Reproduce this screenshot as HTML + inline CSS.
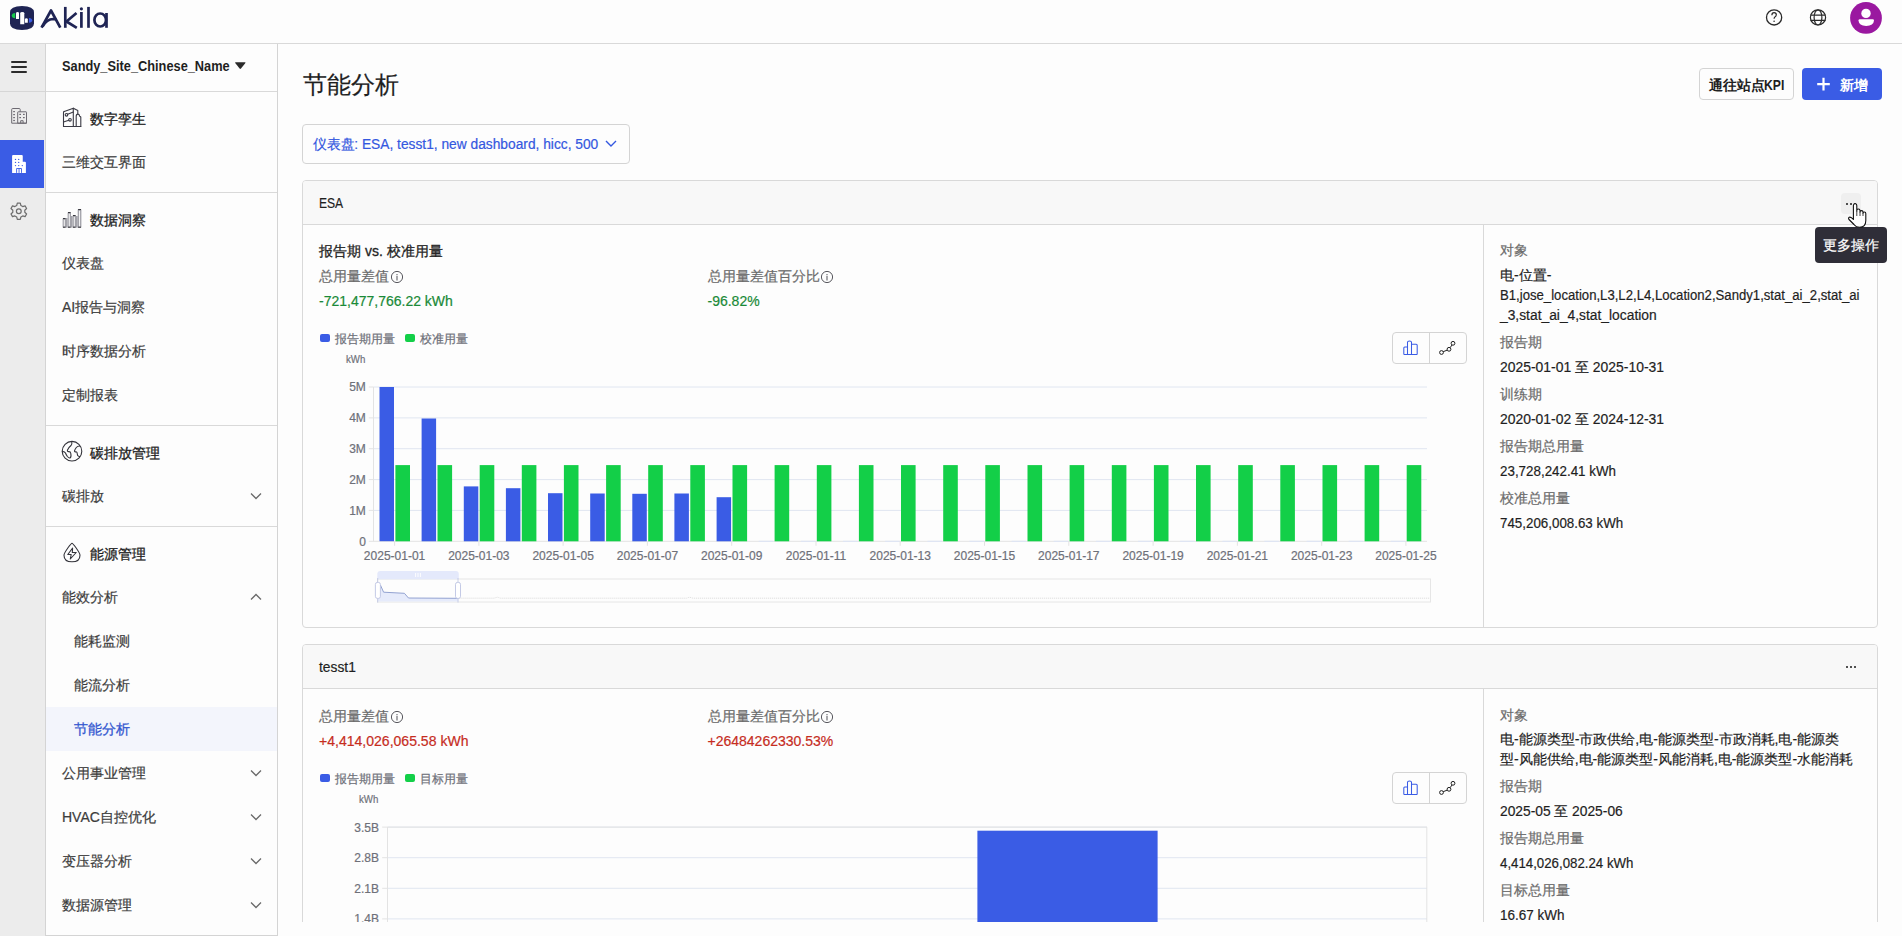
<!DOCTYPE html>
<html><head><meta charset="utf-8">
<style>
*{box-sizing:border-box;}
html,body{margin:0;padding:0;}
body{width:1902px;height:936px;overflow:hidden;position:relative;background:#fdfdfd;font-family:"Liberation Sans",sans-serif;color:#222;}
.abs{position:absolute;}
.t{position:absolute;white-space:nowrap;line-height:1;}
.n{-webkit-text-stroke:0.2px currentColor;}
.m{-webkit-text-stroke:0.3px currentColor;}
svg{position:absolute;overflow:visible;}
</style></head>
<body>

<div class="abs" style="left:0px;top:43px;width:1902px;height:1px;background:#d9d9d9"></div>
<svg style="left:0;top:0" width="120" height="40" viewBox="0 0 120 40">
<path d="M10,12.5 Q10,6 22,6 Q34,6 34,12.5 L34,23.5 Q34,30 22,30 Q10,30 10,23.5 Z" fill="#1f2454"/>
<path d="M15.2,12.9 L15.2,18.3 Q11.7,18 11.7,15.6 Q11.7,13.2 15.2,12.9Z" fill="#16c84a"/>
<path d="M16,19 L16,13.2 Q16,12 17.5,12 Q19,12 19,13.2 L19,19Z" fill="#fff"/>
<path d="M20.2,24.3 L20.2,13.2 Q20.2,12 22.25,12 Q24.3,12 24.3,13.2 L24.3,24.3Z" fill="#fff"/>
<path d="M24.9,22.7 L24.9,19.5 Q24.9,18.3 26.35,18.3 Q27.8,18.3 27.8,19.5 L27.8,22.7Z" fill="#fff"/>
<path d="M29,18 L29,22.7 Q32.2,22.4 32.2,20.3 Q32.2,18.3 29,18Z" fill="#3a5ce5"/>
<g fill="none" stroke="#1f2454" stroke-width="2.7" stroke-linejoin="round">
<path d="M41.5,27.6 L51,10.5 L60.3,27.6"/>
<path d="M42.5,26.5 Q47,19 53,19 L56.3,19.3"/>
<path d="M65.3,6.9 L65.3,27.8"/>
<path d="M76.5,13 L66.5,21.5 L76.8,27.8"/>
<path d="M81.4,12 L81.4,27.8"/>
<path d="M88.5,6.9 L88.5,27.8"/>
<ellipse cx="100.2" cy="20" rx="5.8" ry="6.5"/>
<path d="M106.5,13 L106.5,27.8"/>
</g>
<circle cx="81.4" cy="8.8" r="1.6" fill="#1f2454"/>
</svg>
<svg style="left:1750px;top:0" width="150" height="40" viewBox="1750 0 150 40">
<circle cx="1774.1" cy="17.4" r="7.6" fill="none" stroke="#2a2a2a" stroke-width="1.3"/>
<path d="M1771.9,15.2 Q1771.9,12.7 1774.1,12.7 Q1776.3,12.7 1776.3,14.8 Q1776.3,16.2 1774.9,17 Q1774.1,17.5 1774.1,18.8" fill="none" stroke="#2a2a2a" stroke-width="1.2"/>
<circle cx="1774.1" cy="21.2" r="0.8" fill="#2a2a2a"/>
<g fill="none" stroke="#2a2a2a" stroke-width="1.2">
<circle cx="1818" cy="17.4" r="7.6"/>
<ellipse cx="1818" cy="17.4" rx="3.9" ry="7.6"/>
<path d="M1810.6,15.2 L1825.4,15.2 M1810.6,20.4 L1825.4,20.4"/>
</g>
<circle cx="1866" cy="17.9" r="15.9" fill="#9a18a0"/>
<circle cx="1866" cy="13.4" r="4.7" fill="#fff"/>
<path d="M1858.5,20.6 Q1858.5,19.3 1859.8,19.3 L1872.7,19.3 Q1874,19.3 1874,20.6 Q1873.6,26 1866.2,26 Q1858.9,26 1858.5,20.6Z" fill="#fff"/>
</svg>
<div class="abs" style="left:0px;top:44px;width:45px;height:892px;background:#ececec"></div>
<div class="abs" style="left:45px;top:44px;width:1px;height:892px;background:#d4d4d4"></div>
<div class="abs" style="left:0px;top:91px;width:45px;height:1px;background:#d6d6d6"></div>
<div class="abs" style="left:11px;top:61.3px;width:16px;height:1.6px;background:#2b2b2b;border-radius:1px"></div>
<div class="abs" style="left:11px;top:66.3px;width:16px;height:1.6px;background:#2b2b2b;border-radius:1px"></div>
<div class="abs" style="left:11px;top:71.3px;width:16px;height:1.6px;background:#2b2b2b;border-radius:1px"></div>
<svg style="left:0;top:100px" width="45" height="130" viewBox="0 100 45 130">
<g fill="none" stroke="#6d6a72" stroke-width="1" stroke-linejoin="round">
<path d="M11.7,123.2 L11.7,109.5 Q11.7,108.5 12.7,108.5 L19.2,108.5 Q20.2,108.5 20.2,109.5 L20.2,111.8"/>
<path d="M17.7,123.2 L17.7,112.3 Q17.7,111.8 18.2,111.8 L26,111.8 Q26.5,111.8 26.5,112.3 L26.5,123.2 Z"/>
<path d="M11.7,123.2 L26.5,123.2"/>
<path d="M20.7,123.2 L20.7,120.7 L23.1,120.7 L23.1,123.2"/>
</g>
<g fill="#6d6a72">
<rect x="13.2" y="111" width="1.7" height="1.2"/><rect x="13.2" y="114" width="1.7" height="1.2"/><rect x="13.2" y="117" width="1.7" height="1.2"/><rect x="13.2" y="119.9" width="1.7" height="1.2"/>
<rect x="19.3" y="113.8" width="1.7" height="1.2"/><rect x="23" y="113.8" width="1.7" height="1.2"/><rect x="19.3" y="117" width="1.7" height="1.2"/><rect x="23" y="117" width="1.7" height="1.2"/>
</g>
</svg>
<div class="abs" style="left:0px;top:140px;width:44px;height:48px;background:#3a5ce5"></div>
<svg style="left:0;top:140px" width="45" height="48" viewBox="0 140 45 48">
<path d="M12.1,172.9 L12.1,155.9 Q12.1,154.9 13.1,154.9 L21.75,154.9 Q22.75,154.9 22.75,155.9 L22.75,161.8 L24.9,161.8 Q25.9,161.8 25.9,162.8 L25.9,172.9 Z" fill="#fff"/>
<g fill="#3a5ce5">
<circle cx="15.5" cy="159.4" r="0.7"/><circle cx="18.7" cy="159.4" r="0.7"/>
<circle cx="15.5" cy="162.4" r="0.7"/><circle cx="18.7" cy="162.4" r="0.7"/>
<circle cx="15.5" cy="165.6" r="0.7"/><circle cx="18.7" cy="165.6" r="0.7"/><circle cx="22.3" cy="165.6" r="0.7"/>
</g>
<path d="M16.6,172.9 L16.6,168.5 L21.5,168.5 L21.5,172.9 M19.05,168.5 L19.05,172.9" fill="none" stroke="#3a5ce5" stroke-width="0.9"/>
</svg>
<svg style="left:0;top:195px" width="45" height="35" viewBox="0 195 45 35">
<path fill="none" stroke="#6d6d6d" stroke-width="1.2" stroke-linejoin="round" d="M17.3,203.2 L20.3,203.2 L20.9,205.6 L22.7,206.6 L25.1,205.9 L26.6,208.5 L24.8,210.2 L24.8,212.3 L26.6,214 L25.1,216.6 L22.7,215.9 L20.9,216.9 L20.3,219.3 L17.3,219.3 L16.7,216.9 L14.9,215.9 L12.5,216.6 L11,214 L12.8,212.3 L12.8,210.2 L11,208.5 L12.5,205.9 L14.9,206.6 L16.7,205.6 Z"/>
<circle cx="18.8" cy="211.25" r="2.4" fill="none" stroke="#6d6d6d" stroke-width="1.2"/>
</svg>
<div class="abs" style="left:277px;top:44px;width:1px;height:892px;background:#d4d4d4"></div>
<div class="abs" style="left:46px;top:935px;width:232px;height:1px;background:#d4d4d4"></div>
<div class="abs" style="left:46px;top:91px;width:231px;height:1px;background:#d9d9d9"></div>
<div class="abs" style="left:46px;top:192px;width:231px;height:1px;background:#d9d9d9"></div>
<div class="abs" style="left:46px;top:425px;width:231px;height:1px;background:#d9d9d9"></div>
<div class="abs" style="left:46px;top:526px;width:231px;height:1px;background:#d9d9d9"></div>
<div id="f0" class="t " style="left:62px;top:59.0px;font-size:14px;color:#1f1f1f;font-weight:bold;transform:scaleX(0.9131);transform-origin:0 0;">Sandy_Site_Chinese_Name</div>
<svg style="left:234px;top:60px" width="14" height="12" viewBox="234 60 14 12"><path d="M235.6,62.3 L245,62.3 Q245.8,62.3 245.4,63 L241,68.6 Q240.3,69.3 239.6,68.6 L235.2,63 Q234.8,62.3 235.6,62.3Z" fill="#2b2b2b"/></svg>
<svg style="left:56px;top:100px" width="34" height="34" viewBox="56 100 34 34">
<g fill="none" stroke="#3a3a44" stroke-width="1.1" stroke-linejoin="round" stroke-linecap="round">
<path d="M63.5,126.5 L63.5,112.4 Q63.5,111.6 64.3,111.4 L73.3,108.2 L73.3,126.5 Z"/>
<path d="M73.3,108.2 L77.8,110.6 L77.8,114"/>
<path d="M76.2,126.5 L76.2,116.2 Q76.2,114.1 77.9,114.1 Q79.5,114.1 79.7,116.2 L80.8,117 L80.8,126.5 Z"/>
<path d="M63.5,126.5 L80.8,126.5"/>
<circle cx="66.5" cy="114.8" r="1.3"/>
<path d="M67.7,114.2 L73.3,112"/>
<circle cx="70" cy="119.8" r="1.3"/>
<path d="M63.5,122 L68.8,120.3"/>
</g>
</svg>
<div class="t m" style="left:90px;top:111.5px;font-size:14px;color:#1f1f1f;font-weight:500;">数字孪生</div>
<div class="t n" style="left:62px;top:155.4px;font-size:14px;color:#3c3c3c;font-weight:normal;">三维交互界面</div>
<svg style="left:56px;top:204px" width="34" height="30" viewBox="56 204 34 30">
<path d="M62.6,227.6 L62.6,218.4 L66,218.4 L66,227.6 Z M67.6,227.6 L67.6,212.4 L71,212.4 L71,227.6 Z M72.6,227.6 L72.6,215.4 L76,215.4 L76,227.6Z M77.7,227.6 L77.7,209.4 L81.4,209.4 L81.4,227.6Z" fill="#a3a3aa"/>
<rect x="66" y="218" width="1.6" height="9.6" fill="#a3a3aa"/><rect x="71" y="216" width="1.6" height="11.6" fill="#a3a3aa"/><rect x="76" y="216" width="1.7" height="11.6" fill="#a3a3aa"/>
<g stroke="#fff" stroke-width="0.9"><path d="M64.3,219.6 L64.3,226.6 M69.3,213.6 L69.3,226.6 M74.3,216.6 L74.3,226.6 M79.55,210.6 L79.55,226.6"/></g>
<g stroke="#2a2a32" stroke-width="1"><path d="M63,218.6 L65.6,218.6 M68,212.6 L70.6,212.6 M73,215.6 L75.6,215.6 M78.1,209.6 L81,209.6 M63,227.2 L65.6,227.2 M68,227.2 L70.6,227.2 M73,227.2 L75.6,227.2 M78.1,227.2 L81,227.2"/></g>
</svg>
<div class="t m" style="left:90px;top:212.7px;font-size:14px;color:#1f1f1f;font-weight:500;">数据洞察</div>
<div class="t n" style="left:62px;top:255.9px;font-size:14px;color:#3c3c3c;font-weight:normal;">仪表盘</div>
<div class="t n" style="left:62px;top:343.9px;font-size:14px;color:#3c3c3c;font-weight:normal;">时序数据分析</div>
<div class="t n" style="left:62px;top:387.9px;font-size:14px;color:#3c3c3c;font-weight:normal;">定制报表</div>
<div id="f1" class="t n" style="left:62px;top:299.9px;font-size:14px;color:#3c3c3c;font-weight:normal;">AI报告与洞察</div>
<svg style="left:56px;top:436px" width="40" height="30" viewBox="56 436 40 30">
<g fill="none" stroke="#33333a" stroke-width="1.1" stroke-linejoin="round" stroke-linecap="round">
<circle cx="72" cy="451.2" r="9.8"/>
<path d="M71.8,441.5 Q72.2,444.5 71,445.5 Q68.5,447.5 67.5,450 Q67,451.6 68.6,451.6 Q70.5,451.4 70.8,453.5 Q71.5,457 70,458 Q69,458.4 67.4,456.5 Q66,454.4 65.5,453 Q64.8,451.8 62.4,451.2"/>
<path d="M79.7,446 Q77.5,446 76.3,447.5 Q74.8,449.3 74.5,451 Q74.5,452 76.2,451.8 Q77.2,451.8 77.3,454 Q77.2,455.8 78.7,456.3 L79.8,456.8"/>
</g>
</svg>
<div class="t m" style="left:90px;top:445.5px;font-size:14px;color:#1f1f1f;font-weight:500;">碳排放管理</div>
<div class="t n" style="left:62px;top:488.9px;font-size:14px;color:#3c3c3c;font-weight:normal;">碳排放</div>
<svg style="left:248px;top:490px" width="16" height="12" viewBox="248 490 16 12"><path d="M251,493.5 L256,498.5 L261,493.5" fill="none" stroke="#6a6a6a" stroke-width="1.3"/></svg>
<svg style="left:56px;top:538px" width="40" height="30" viewBox="56 538 40 30">
<g fill="none" stroke="#33333a" stroke-width="1.1" stroke-linejoin="round">
<path d="M72,543.2 Q73,543.5 76,547.8 Q80,553.5 80,555.2 Q80,561.8 72,561.8 Q64,561.8 64,555.2 Q64,553.5 68,547.8 Q71,543.5 72,543.2Z"/>
<path d="M72.6,548 L67.8,554.5 L71.2,554.5 L70.3,559 L76.2,552.5 L72.3,552.5 Z"/>
</g>
</svg>
<div class="t m" style="left:90px;top:546.5px;font-size:14px;color:#1f1f1f;font-weight:500;">能源管理</div>
<div class="t n" style="left:62px;top:589.9px;font-size:14px;color:#3c3c3c;font-weight:normal;">能效分析</div>
<svg style="left:248px;top:591px" width="16" height="12" viewBox="248 591 16 12"><path d="M251,599.5 L256,594.5 L261,599.5" fill="none" stroke="#6a6a6a" stroke-width="1.3"/></svg>
<div class="t n" style="left:74px;top:633.9px;font-size:14px;color:#3c3c3c;font-weight:normal;">能耗监测</div>
<div class="t n" style="left:74px;top:677.9px;font-size:14px;color:#3c3c3c;font-weight:normal;">能流分析</div>
<div class="abs" style="left:46px;top:707px;width:231px;height:44px;background:#f3f5fc"></div>
<div class="t m" style="left:74px;top:721.9px;font-size:14px;color:#3458d0;font-weight:500;">节能分析</div>
<div class="t n" style="left:62px;top:765.9px;font-size:14px;color:#3c3c3c;font-weight:normal;">公用事业管理</div>
<svg style="left:248px;top:766.9px" width="16" height="12" viewBox="248 766.9 16 12"><path d="M251,770.4 L256,775.4 L261,770.4" fill="none" stroke="#6a6a6a" stroke-width="1.3"/></svg>
<div class="t n" style="left:62px;top:809.9px;font-size:14px;color:#3c3c3c;font-weight:normal;">HVAC自控优化</div>
<svg style="left:248px;top:810.9px" width="16" height="12" viewBox="248 810.9 16 12"><path d="M251,814.4 L256,819.4 L261,814.4" fill="none" stroke="#6a6a6a" stroke-width="1.3"/></svg>
<div class="t n" style="left:62px;top:853.9px;font-size:14px;color:#3c3c3c;font-weight:normal;">变压器分析</div>
<svg style="left:248px;top:854.9px" width="16" height="12" viewBox="248 854.9 16 12"><path d="M251,858.4 L256,863.4 L261,858.4" fill="none" stroke="#6a6a6a" stroke-width="1.3"/></svg>
<div class="t n" style="left:62px;top:897.9px;font-size:14px;color:#3c3c3c;font-weight:normal;">数据源管理</div>
<svg style="left:248px;top:898.9px" width="16" height="12" viewBox="248 898.9 16 12"><path d="M251,902.4 L256,907.4 L261,902.4" fill="none" stroke="#6a6a6a" stroke-width="1.3"/></svg>
<div class="t n" style="left:303px;top:73.0px;font-size:24px;color:#1f1f1f;font-weight:normal;">节能分析</div>
<div class="abs" style="left:1699px;top:68px;width:95px;height:32px;border:1px solid #d4d4d4;border-radius:4px;background:#fdfdfd"></div>
<div id="f2" class="t " style="left:1708.5px;top:77.5px;font-size:14px;color:#1f1f1f;font-weight:bold;">通往站点</div>
<div class="t " style="left:1764px;top:77.5px;font-size:14px;color:#1f1f1f;font-weight:bold;transform:scaleX(0.87);transform-origin:0 0;">KPI</div>
<div class="abs" style="left:1802px;top:68px;width:80px;height:32px;background:#3a5ce5;border-radius:4px"></div>
<svg style="left:1815px;top:76px" width="16" height="16" viewBox="1815 76 16 16"><path d="M1823.5,77.8 L1823.5,90.5 M1817.2,84.1 L1829.8,84.1" stroke="#fff" stroke-width="2.2"/></svg>
<div class="t " style="left:1839.5px;top:77.5px;font-size:14px;color:#fff;font-weight:bold;">新增</div>
<div class="abs" style="left:302px;top:124px;width:328px;height:40px;border:1px solid #d4d4d4;border-radius:4px;background:#fdfdfd"></div>
<div id="f3" class="t n" style="left:313px;top:137.0px;font-size:14px;color:#3458e0;font-weight:normal;transform:scaleX(0.9828);transform-origin:0 0;">仪表盘: ESA, tesst1, new dashboard, hicc, 500</div>
<svg style="left:600px;top:136px" width="20" height="16" viewBox="600 136 20 16"><path d="M606,141 L611,146 L616,141" fill="none" stroke="#3458e0" stroke-width="1.4"/></svg>
<div class="abs" style="left:302px;top:180px;width:1576px;height:448px;border:1px solid #d9d9d9;border-radius:4px;background:#fdfdfd"></div>
<div class="abs" style="left:303px;top:181px;width:1574px;height:44px;background:#f8f8f8;border-radius:3px 3px 0 0"></div>
<div class="abs" style="left:303px;top:224px;width:1574px;height:1px;background:#d9d9d9"></div>
<div class="abs" style="left:1483px;top:225px;width:1px;height:402px;background:#d9d9d9"></div>
<div id="f4" class="t n" style="left:319px;top:196.0px;font-size:14px;color:#1f1f1f;font-weight:normal;transform:scaleX(0.8600);transform-origin:0 0;">ESA</div>
<div id="f5" class="t m" style="left:319px;top:244.3px;font-size:14px;color:#1f1f1f;font-weight:500;">报告期 vs. 校准用量</div>
<div class="t n" style="left:319px;top:269.3px;font-size:14px;color:#6b6b6b;font-weight:normal;">总用量差值</div>
<svg style="left:389px;top:268.5px" width="16" height="16" viewBox="389 268.5 16 16"><circle cx="397" cy="276.5" r="5.6" fill="none" stroke="#58585e" stroke-width="1"/><path d="M397,275.6 L397,280.0" stroke="#58585e" stroke-width="1.05"/><circle cx="397" cy="274.2" r="0.65" fill="#58585e"/></svg>
<div class="t n" style="left:319px;top:294.4px;font-size:14px;color:#1a8a38;font-weight:normal;">-721,477,766.22 kWh</div>
<div class="t n" style="left:707.5px;top:269.3px;font-size:14px;color:#6b6b6b;font-weight:normal;">总用量差值百分比</div>
<svg style="left:819px;top:268.5px" width="16" height="16" viewBox="819 268.5 16 16"><circle cx="827" cy="276.5" r="5.6" fill="none" stroke="#58585e" stroke-width="1"/><path d="M827,275.6 L827,280.0" stroke="#58585e" stroke-width="1.05"/><circle cx="827" cy="274.2" r="0.65" fill="#58585e"/></svg>
<div class="t n" style="left:707.5px;top:294.4px;font-size:14px;color:#1a8a38;font-weight:normal;">-96.82%</div>
<div class="abs" style="left:320px;top:333.9px;width:10px;height:7.9px;background:#3a5ce5;border-radius:2px"></div>
<div class="t n" style="left:335px;top:332.8px;font-size:12px;color:#6e7079;font-weight:normal;">报告期用量</div>
<div class="abs" style="left:405px;top:333.9px;width:10px;height:7.9px;background:#13cf48;border-radius:2px"></div>
<div class="t n" style="left:420px;top:332.8px;font-size:12px;color:#6e7079;font-weight:normal;">校准用量</div>
<div class="abs" style="left:1392px;top:332px;width:75px;height:32px;border:1px solid #d4d4d4;border-radius:4px;background:#fdfdfd"></div>
<div class="abs" style="left:1429px;top:332px;width:1px;height:32px;background:#d4d4d4"></div>
<svg style="left:1392px;top:332px" width="75" height="32" viewBox="1392 332 75 32">
<path d="M1403.8,354.5 L1403.8,348 Q1403.8,347 1404.8,347 L1407.5,347 M1407.5,354.5 L1407.5,342.3 Q1407.5,341 1409.5,341 Q1411.5,341 1411.5,342.3 L1411.5,354.5 M1411.5,344.2 L1416.2,344.2 Q1417.2,344.2 1417.2,345.2 L1417.2,354.5 M1403.8,354.5 L1417.2,354.5" fill="none" stroke="#3a5ce5" stroke-width="1.05" stroke-linejoin="round"/>
<g fill="none" stroke="#1f1f1f" stroke-width="1">
<circle cx="1441.5" cy="352.5" r="1.9"/><circle cx="1449" cy="349.3" r="1.9"/><circle cx="1453" cy="343.3" r="1.9"/>
<path d="M1443.2,351.7 L1447.3,350.1 M1450.1,347.7 L1452,345"/>
</g></svg>
<div class="t n" style="left:345.6px;top:353.5px;font-size:11px;color:#6e7079;font-weight:normal;transform:scaleX(0.88);transform-origin:0 0;">kWh</div>
<svg style="left:300px;top:370px" width="1180" height="240" viewBox="300 370 1180 240">
<path d="M373.5,510.4 L1427,510.4" stroke="#e0e6f1" stroke-width="1"/>
<path d="M368.8,510.4 L373.5,510.4" stroke="#e3e3e3" stroke-width="1"/>
<path d="M373.5,479.6 L1427,479.6" stroke="#e0e6f1" stroke-width="1"/>
<path d="M368.8,479.6 L373.5,479.6" stroke="#e3e3e3" stroke-width="1"/>
<path d="M373.5,448.7 L1427,448.7" stroke="#e0e6f1" stroke-width="1"/>
<path d="M368.8,448.7 L373.5,448.7" stroke="#e3e3e3" stroke-width="1"/>
<path d="M373.5,417.9 L1427,417.9" stroke="#e0e6f1" stroke-width="1"/>
<path d="M368.8,417.9 L373.5,417.9" stroke="#e3e3e3" stroke-width="1"/>
<path d="M373.5,387.0 L1427,387.0" stroke="#e0e6f1" stroke-width="1"/>
<path d="M368.8,387.0 L373.5,387.0" stroke="#e3e3e3" stroke-width="1"/>
<path d="M368.8,541.3 L1427,541.3" stroke="#e3e3e3" stroke-width="1"/>
<path d="M373.5,387.0 L373.5,541.3" stroke="#e3e3e3" stroke-width="1"/>
<rect x="379.5" y="387.0" width="14.5" height="154.2" fill="#3a5ce5"/>
<rect x="395.4" y="465.1" width="14.6" height="76.2" fill="#13cf48"/>
<path d="M394.6,541.3 L394.6,545.8" stroke="#e3e3e3" stroke-width="1"/>
<rect x="421.6" y="418.5" width="14.5" height="122.8" fill="#3a5ce5"/>
<rect x="437.5" y="465.1" width="14.6" height="76.2" fill="#13cf48"/>
<rect x="463.8" y="486.4" width="14.5" height="54.9" fill="#3a5ce5"/>
<rect x="479.7" y="465.1" width="14.6" height="76.2" fill="#13cf48"/>
<path d="M478.9,541.3 L478.9,545.8" stroke="#e3e3e3" stroke-width="1"/>
<rect x="505.9" y="488.2" width="14.5" height="53.1" fill="#3a5ce5"/>
<rect x="521.8" y="465.1" width="14.6" height="76.2" fill="#13cf48"/>
<rect x="548.0" y="493.2" width="14.5" height="48.1" fill="#3a5ce5"/>
<rect x="563.9" y="465.1" width="14.6" height="76.2" fill="#13cf48"/>
<path d="M563.1,541.3 L563.1,545.8" stroke="#e3e3e3" stroke-width="1"/>
<rect x="590.2" y="493.5" width="14.5" height="47.8" fill="#3a5ce5"/>
<rect x="606.1" y="465.1" width="14.6" height="76.2" fill="#13cf48"/>
<rect x="632.3" y="493.8" width="14.5" height="47.5" fill="#3a5ce5"/>
<rect x="648.2" y="465.1" width="14.6" height="76.2" fill="#13cf48"/>
<path d="M647.4,541.3 L647.4,545.8" stroke="#e3e3e3" stroke-width="1"/>
<rect x="674.4" y="493.5" width="14.5" height="47.8" fill="#3a5ce5"/>
<rect x="690.3" y="465.1" width="14.6" height="76.2" fill="#13cf48"/>
<rect x="716.6" y="497.2" width="14.5" height="44.1" fill="#3a5ce5"/>
<rect x="732.5" y="465.1" width="14.6" height="76.2" fill="#13cf48"/>
<path d="M731.7,541.3 L731.7,545.8" stroke="#e3e3e3" stroke-width="1"/>
<rect x="758.7" y="540.8" width="14.5" height="1" fill="#dde4f6"/>
<rect x="774.6" y="465.1" width="14.6" height="76.2" fill="#13cf48"/>
<rect x="800.9" y="540.8" width="14.5" height="1" fill="#dde4f6"/>
<rect x="816.8" y="465.1" width="14.6" height="76.2" fill="#13cf48"/>
<path d="M816.0,541.3 L816.0,545.8" stroke="#e3e3e3" stroke-width="1"/>
<rect x="843.0" y="540.8" width="14.5" height="1" fill="#dde4f6"/>
<rect x="858.9" y="465.1" width="14.6" height="76.2" fill="#13cf48"/>
<rect x="885.1" y="540.8" width="14.5" height="1" fill="#dde4f6"/>
<rect x="901.0" y="465.1" width="14.6" height="76.2" fill="#13cf48"/>
<path d="M900.2,541.3 L900.2,545.8" stroke="#e3e3e3" stroke-width="1"/>
<rect x="927.3" y="540.8" width="14.5" height="1" fill="#dde4f6"/>
<rect x="943.2" y="465.1" width="14.6" height="76.2" fill="#13cf48"/>
<rect x="969.4" y="540.8" width="14.5" height="1" fill="#dde4f6"/>
<rect x="985.3" y="465.1" width="14.6" height="76.2" fill="#13cf48"/>
<path d="M984.5,541.3 L984.5,545.8" stroke="#e3e3e3" stroke-width="1"/>
<rect x="1011.6" y="540.8" width="14.5" height="1" fill="#dde4f6"/>
<rect x="1027.5" y="465.1" width="14.6" height="76.2" fill="#13cf48"/>
<rect x="1053.7" y="540.8" width="14.5" height="1" fill="#dde4f6"/>
<rect x="1069.6" y="465.1" width="14.6" height="76.2" fill="#13cf48"/>
<path d="M1068.8,541.3 L1068.8,545.8" stroke="#e3e3e3" stroke-width="1"/>
<rect x="1095.9" y="540.8" width="14.5" height="1" fill="#dde4f6"/>
<rect x="1111.8" y="465.1" width="14.6" height="76.2" fill="#13cf48"/>
<rect x="1138.0" y="540.8" width="14.5" height="1" fill="#dde4f6"/>
<rect x="1153.9" y="465.1" width="14.6" height="76.2" fill="#13cf48"/>
<path d="M1153.1,541.3 L1153.1,545.8" stroke="#e3e3e3" stroke-width="1"/>
<rect x="1180.1" y="540.8" width="14.5" height="1" fill="#dde4f6"/>
<rect x="1196.0" y="465.1" width="14.6" height="76.2" fill="#13cf48"/>
<rect x="1222.3" y="540.8" width="14.5" height="1" fill="#dde4f6"/>
<rect x="1238.2" y="465.1" width="14.6" height="76.2" fill="#13cf48"/>
<path d="M1237.4,541.3 L1237.4,545.8" stroke="#e3e3e3" stroke-width="1"/>
<rect x="1264.4" y="540.8" width="14.5" height="1" fill="#dde4f6"/>
<rect x="1280.3" y="465.1" width="14.6" height="76.2" fill="#13cf48"/>
<rect x="1306.6" y="540.8" width="14.5" height="1" fill="#dde4f6"/>
<rect x="1322.5" y="465.1" width="14.6" height="76.2" fill="#13cf48"/>
<path d="M1321.7,541.3 L1321.7,545.8" stroke="#e3e3e3" stroke-width="1"/>
<rect x="1348.7" y="540.8" width="14.5" height="1" fill="#dde4f6"/>
<rect x="1364.6" y="465.1" width="14.6" height="76.2" fill="#13cf48"/>
<rect x="1390.8" y="540.8" width="14.5" height="1" fill="#dde4f6"/>
<rect x="1406.7" y="465.1" width="14.6" height="76.2" fill="#13cf48"/>
<path d="M1405.9,541.3 L1405.9,545.8" stroke="#e3e3e3" stroke-width="1"/>
<path d="M458.5,598.2 L494,598.2 L497.3,597.2 L500.5,598.2 L686.5,598.2 L689.7,597.2 L693,598.2 L1430,598.2" fill="none" stroke="#d8d8d8" stroke-width="0.8" stroke-dasharray="1.2,0.8"/>
<rect x="377.5" y="579" width="1053" height="23" fill="none" stroke="#e6e6e6" stroke-width="1"/>
<path d="M377.3,579.2 L377.3,574 Q377.3,571.1 380.3,571.1 L455.8,571.1 Q458.8,571.1 458.8,574 L458.8,579.2Z" fill="#e4e9fb"/>
<path d="M380.4,585 L383.6,592.2 L404.4,593.3 L408.5,598 L458.5,598.3 L458.5,601.6 L377.5,601.6 L377.5,585Z" fill="#e6ebfb"/>
<path d="M380.4,585 L383.6,592.2 L404.4,593.3 L408.5,598 L458.5,598.3" fill="none" stroke="#8898cc" stroke-width="0.9"/>
<path d="M377.7,578 L377.7,602.6 M458,578 L458,602.6" stroke="#b9c0e0" stroke-width="0.7"/>
<rect x="375.4" y="582.4" width="5" height="16" rx="2" fill="#fff" stroke="#b5bde0" stroke-width="0.8"/>
<rect x="455.5" y="582.4" width="5" height="16" rx="2" fill="#fff" stroke="#b5bde0" stroke-width="0.8"/>
<path d="M415.6,573 L415.6,577 M418,573 L418,577 M420.4,573 L420.4,577" stroke="#fff" stroke-width="0.9"/>
</svg>
<div class="t n" style="right:1536.2px;top:535.6px;font-size:12px;color:#6e7079;">0</div>
<div class="t n" style="right:1536.2px;top:504.7px;font-size:12px;color:#6e7079;">1M</div>
<div class="t n" style="right:1536.2px;top:473.9px;font-size:12px;color:#6e7079;">2M</div>
<div class="t n" style="right:1536.2px;top:443.0px;font-size:12px;color:#6e7079;">3M</div>
<div class="t n" style="right:1536.2px;top:412.2px;font-size:12px;color:#6e7079;">4M</div>
<div class="t n" style="right:1536.2px;top:381.3px;font-size:12px;color:#6e7079;">5M</div>
<div class="t n" style="left:334.57px;width:120px;text-align:center;top:549.5px;font-size:12px;color:#6e7079;">2025-01-01</div>
<div class="t n" style="left:418.85px;width:120px;text-align:center;top:549.5px;font-size:12px;color:#6e7079;">2025-01-03</div>
<div class="t n" style="left:503.13px;width:120px;text-align:center;top:549.5px;font-size:12px;color:#6e7079;">2025-01-05</div>
<div class="t n" style="left:587.4100000000001px;width:120px;text-align:center;top:549.5px;font-size:12px;color:#6e7079;">2025-01-07</div>
<div class="t n" style="left:671.69px;width:120px;text-align:center;top:549.5px;font-size:12px;color:#6e7079;">2025-01-09</div>
<div class="t n" style="left:755.97px;width:120px;text-align:center;top:549.5px;font-size:12px;color:#6e7079;">2025-01-11</div>
<div class="t n" style="left:840.25px;width:120px;text-align:center;top:549.5px;font-size:12px;color:#6e7079;">2025-01-13</div>
<div class="t n" style="left:924.53px;width:120px;text-align:center;top:549.5px;font-size:12px;color:#6e7079;">2025-01-15</div>
<div class="t n" style="left:1008.81px;width:120px;text-align:center;top:549.5px;font-size:12px;color:#6e7079;">2025-01-17</div>
<div class="t n" style="left:1093.0900000000001px;width:120px;text-align:center;top:549.5px;font-size:12px;color:#6e7079;">2025-01-19</div>
<div class="t n" style="left:1177.37px;width:120px;text-align:center;top:549.5px;font-size:12px;color:#6e7079;">2025-01-21</div>
<div class="t n" style="left:1261.65px;width:120px;text-align:center;top:549.5px;font-size:12px;color:#6e7079;">2025-01-23</div>
<div class="t n" style="left:1345.93px;width:120px;text-align:center;top:549.5px;font-size:12px;color:#6e7079;">2025-01-25</div>
<div class="t n" style="left:1500px;top:243.3px;font-size:14px;color:#6b6b6b;font-weight:normal;">对象</div>
<div class="t n" style="left:1500px;top:268.0px;font-size:14px;color:#1f1f1f;font-weight:normal;">电-位置-</div>
<div id="f6" class="t n" style="left:1500px;top:288.3px;font-size:14px;color:#1f1f1f;font-weight:normal;transform:scaleX(0.9388);transform-origin:0 0;">B1,jose_location,L3,L2,L4,Location2,Sandy1,stat_ai_2,stat_ai</div>
<div id="f7" class="t n" style="left:1500px;top:308.4px;font-size:14px;color:#1f1f1f;font-weight:normal;transform:scaleX(0.9867);transform-origin:0 0;">_3,stat_ai_4,stat_location</div>
<div class="t n" style="left:1500px;top:334.8px;font-size:14px;color:#6b6b6b;font-weight:normal;">报告期</div>
<div id="f8" class="t n" style="left:1500px;top:359.5px;font-size:14px;color:#1f1f1f;font-weight:normal;transform:scaleX(0.9939);transform-origin:0 0;">2025-01-01 至 2025-10-31</div>
<div class="t n" style="left:1500px;top:386.8px;font-size:14px;color:#6b6b6b;font-weight:normal;">训练期</div>
<div id="f9" class="t n" style="left:1500px;top:411.5px;font-size:14px;color:#1f1f1f;font-weight:normal;transform:scaleX(0.9939);transform-origin:0 0;">2020-01-02 至 2024-12-31</div>
<div class="t n" style="left:1500px;top:438.8px;font-size:14px;color:#6b6b6b;font-weight:normal;">报告期总用量</div>
<div id="f10" class="t n" style="left:1500px;top:463.5px;font-size:14px;color:#1f1f1f;font-weight:normal;transform:scaleX(0.9554);transform-origin:0 0;">23,728,242.41 kWh</div>
<div class="t n" style="left:1500px;top:490.8px;font-size:14px;color:#6b6b6b;font-weight:normal;">校准总用量</div>
<div id="f11" class="t n" style="left:1500px;top:515.5px;font-size:14px;color:#1f1f1f;font-weight:normal;transform:scaleX(0.9535);transform-origin:0 0;">745,206,008.63 kWh</div>
<div class="abs" style="left:1841px;top:193px;width:20px;height:21px;background:#efefef;border-radius:4px"></div>
<div class="abs" style="left:1845.6000000000001px;top:202.8px;width:2.2px;height:2.2px;background:#1a1a1a;border-radius:1.1px"></div>
<div class="abs" style="left:1849.9px;top:202.8px;width:2.2px;height:2.2px;background:#1a1a1a;border-radius:1.1px"></div>
<div class="abs" style="left:1854.2px;top:202.8px;width:2.2px;height:2.2px;background:#1a1a1a;border-radius:1.1px"></div>
<div class="abs" style="left:1815px;top:227px;width:72px;height:36px;background:#2f2e38;border-radius:4px"></div>
<div class="t n" style="left:1823px;top:238.0px;font-size:14px;color:#ffffff;font-weight:500;">更多操作</div>
<svg style="left:1844px;top:198px" width="26" height="32" viewBox="1844 198 26 32">
<path d="M1853.4,219.5 L1853.4,205.5 Q1853.4,203.8 1855.1,203.8 Q1856.8,203.8 1856.8,205.5 L1856.8,211 L1856.8,210.5 Q1856.8,209 1858.4,209 Q1860,209 1860,210.5 L1860,212 Q1860,210.6 1861.5,210.6 Q1863,210.6 1863,212 L1863,213.2 Q1863,212 1864.4,212 Q1865.8,212 1865.8,213.5 L1865.8,220.5 Q1865.8,227.3 1859.5,227.3 Q1856,227.3 1854,224.5 L1849,219.5 Q1848,218 1849.3,217.3 Q1850.8,216.6 1853.4,219.5Z" fill="#fff" stroke="#111" stroke-width="1.1" stroke-linejoin="round"/>
<path d="M1856.8,211 L1856.8,216 M1860,212 L1860,216 M1863,213.2 L1863,216" stroke="#111" stroke-width="0.8"/>
</svg>
<div class="abs" style="left:302px;top:644px;width:1576px;height:456px;border:1px solid #d9d9d9;border-radius:4px;background:#fdfdfd"></div>
<div class="abs" style="left:303px;top:645px;width:1574px;height:44px;background:#f8f8f8;border-radius:3px 3px 0 0"></div>
<div class="abs" style="left:303px;top:688px;width:1574px;height:1px;background:#d9d9d9"></div>
<div class="abs" style="left:1483px;top:689px;width:1px;height:410px;background:#d9d9d9"></div>
<div id="f12" class="t n" style="left:319px;top:660.0px;font-size:14px;color:#1f1f1f;font-weight:normal;transform:scaleX(0.9852);transform-origin:0 0;">tesst1</div>
<div class="abs" style="left:1845.6000000000001px;top:666.3px;width:2.2px;height:2.2px;background:#1a1a1a;border-radius:1.1px"></div>
<div class="abs" style="left:1849.9px;top:666.3px;width:2.2px;height:2.2px;background:#1a1a1a;border-radius:1.1px"></div>
<div class="abs" style="left:1854.2px;top:666.3px;width:2.2px;height:2.2px;background:#1a1a1a;border-radius:1.1px"></div>
<div class="t n" style="left:319px;top:709.3px;font-size:14px;color:#6b6b6b;font-weight:normal;">总用量差值</div>
<svg style="left:389px;top:708.5px" width="16" height="16" viewBox="389 708.5 16 16"><circle cx="397" cy="716.5" r="5.6" fill="none" stroke="#58585e" stroke-width="1"/><path d="M397,715.6 L397,720.0" stroke="#58585e" stroke-width="1.05"/><circle cx="397" cy="714.2" r="0.65" fill="#58585e"/></svg>
<div id="f13" class="t n" style="left:319px;top:734.3px;font-size:14px;color:#c62d1f;font-weight:normal;transform:scaleX(1.0027);transform-origin:0 0;">+4,414,026,065.58 kWh</div>
<div class="t n" style="left:707.5px;top:709.3px;font-size:14px;color:#6b6b6b;font-weight:normal;">总用量差值百分比</div>
<svg style="left:819px;top:708.5px" width="16" height="16" viewBox="819 708.5 16 16"><circle cx="827" cy="716.5" r="5.6" fill="none" stroke="#58585e" stroke-width="1"/><path d="M827,715.6 L827,720.0" stroke="#58585e" stroke-width="1.05"/><circle cx="827" cy="714.2" r="0.65" fill="#58585e"/></svg>
<div id="f14" class="t n" style="left:707.5px;top:734.3px;font-size:14px;color:#c62d1f;font-weight:normal;">+26484262330.53%</div>
<div class="abs" style="left:320px;top:774.2px;width:10px;height:7.9px;background:#3a5ce5;border-radius:2px"></div>
<div class="t n" style="left:335px;top:773.1px;font-size:12px;color:#6e7079;font-weight:normal;">报告期用量</div>
<div class="abs" style="left:405px;top:774.2px;width:10px;height:7.9px;background:#13cf48;border-radius:2px"></div>
<div class="t n" style="left:420px;top:773.1px;font-size:12px;color:#6e7079;font-weight:normal;">目标用量</div>
<div class="abs" style="left:1392px;top:772px;width:75px;height:32px;border:1px solid #d4d4d4;border-radius:4px;background:#fdfdfd"></div>
<div class="abs" style="left:1429px;top:772px;width:1px;height:32px;background:#d4d4d4"></div>
<svg style="left:1392px;top:772px" width="75" height="32" viewBox="1392 772 75 32">
<path d="M1403.8,794.5 L1403.8,788 Q1403.8,787 1404.8,787 L1407.5,787 M1407.5,794.5 L1407.5,782.3 Q1407.5,781 1409.5,781 Q1411.5,781 1411.5,782.3 L1411.5,794.5 M1411.5,784.2 L1416.2,784.2 Q1417.2,784.2 1417.2,785.2 L1417.2,794.5 M1403.8,794.5 L1417.2,794.5" fill="none" stroke="#3a5ce5" stroke-width="1.05" stroke-linejoin="round"/>
<g fill="none" stroke="#1f1f1f" stroke-width="1">
<circle cx="1441.5" cy="792.5" r="1.9"/><circle cx="1449" cy="789.3" r="1.9"/><circle cx="1453" cy="783.3" r="1.9"/>
<path d="M1443.2,791.7 L1447.3,790.1 M1450.1,787.7 L1452,785"/>
</g></svg>
<div class="t n" style="left:359.4px;top:794.3px;font-size:11px;color:#6e7079;font-weight:normal;transform:scaleX(0.88);transform-origin:0 0;">kWh</div>
<svg style="left:300px;top:810px" width="1180" height="120" viewBox="300 810 1180 120">
<path d="M387.5,827.1 L1427,827.1" stroke="#e0e6f1" stroke-width="1"/>
<path d="M382.2,827.1 L387.5,827.1" stroke="#e3e3e3" stroke-width="1"/>
<path d="M387.5,857.7 L1427,857.7" stroke="#e0e6f1" stroke-width="1"/>
<path d="M382.2,857.7 L387.5,857.7" stroke="#e3e3e3" stroke-width="1"/>
<path d="M387.5,888.3 L1427,888.3" stroke="#e0e6f1" stroke-width="1"/>
<path d="M382.2,888.3 L387.5,888.3" stroke="#e3e3e3" stroke-width="1"/>
<path d="M387.5,918.9 L1427,918.9" stroke="#e0e6f1" stroke-width="1"/>
<path d="M382.2,918.9 L387.5,918.9" stroke="#e3e3e3" stroke-width="1"/>
<path d="M387.5,827 L387.5,930" stroke="#e3e3e3" stroke-width="1"/>
<path d="M387.5,827.1 L1427,827.1 M1426.8,827.1 L1426.8,930" stroke="#e3e3e3" stroke-width="1"/>
<rect x="977.4" y="830.7" width="180.2" height="100" fill="#3a5ce5"/>
</svg>
<div class="t n" style="right:1523px;top:821.6px;font-size:12px;color:#6e7079;">3.5B</div>
<div class="t n" style="right:1523px;top:852.2px;font-size:12px;color:#6e7079;">2.8B</div>
<div class="t n" style="right:1523px;top:882.8px;font-size:12px;color:#6e7079;">2.1B</div>
<div class="t n" style="right:1523px;top:913.4px;font-size:12px;color:#6e7079;">1.4B</div>
<div class="t n" style="left:1500px;top:707.8px;font-size:14px;color:#6b6b6b;font-weight:normal;">对象</div>
<div id="f15" class="t n" style="left:1500px;top:731.5px;font-size:14px;color:#1f1f1f;font-weight:normal;">电-能源类型-市政供给,电-能源类型-市政消耗,电-能源类</div>
<div id="f16" class="t n" style="left:1500px;top:751.5px;font-size:14px;color:#1f1f1f;font-weight:normal;">型-风能供给,电-能源类型-风能消耗,电-能源类型-水能消耗</div>
<div class="t n" style="left:1500px;top:779.4px;font-size:14px;color:#6b6b6b;font-weight:normal;">报告期</div>
<div id="f17" class="t n" style="left:1500px;top:803.6px;font-size:14px;color:#1f1f1f;font-weight:normal;transform:scaleX(0.9855);transform-origin:0 0;">2025-05 至 2025-06</div>
<div class="t n" style="left:1500px;top:831.4px;font-size:14px;color:#6b6b6b;font-weight:normal;">报告期总用量</div>
<div id="f18" class="t n" style="left:1500px;top:855.6px;font-size:14px;color:#1f1f1f;font-weight:normal;transform:scaleX(0.9472);transform-origin:0 0;">4,414,026,082.24 kWh</div>
<div class="t n" style="left:1500px;top:883.4px;font-size:14px;color:#6b6b6b;font-weight:normal;">目标总用量</div>
<div id="f19" class="t n" style="left:1500px;top:907.6px;font-size:14px;color:#1f1f1f;font-weight:normal;transform:scaleX(0.9643);transform-origin:0 0;">16.67 kWh</div>
<div class="abs" style="left:278px;top:922px;width:1624px;height:14px;background:#fdfdfd"></div>
</body></html>
